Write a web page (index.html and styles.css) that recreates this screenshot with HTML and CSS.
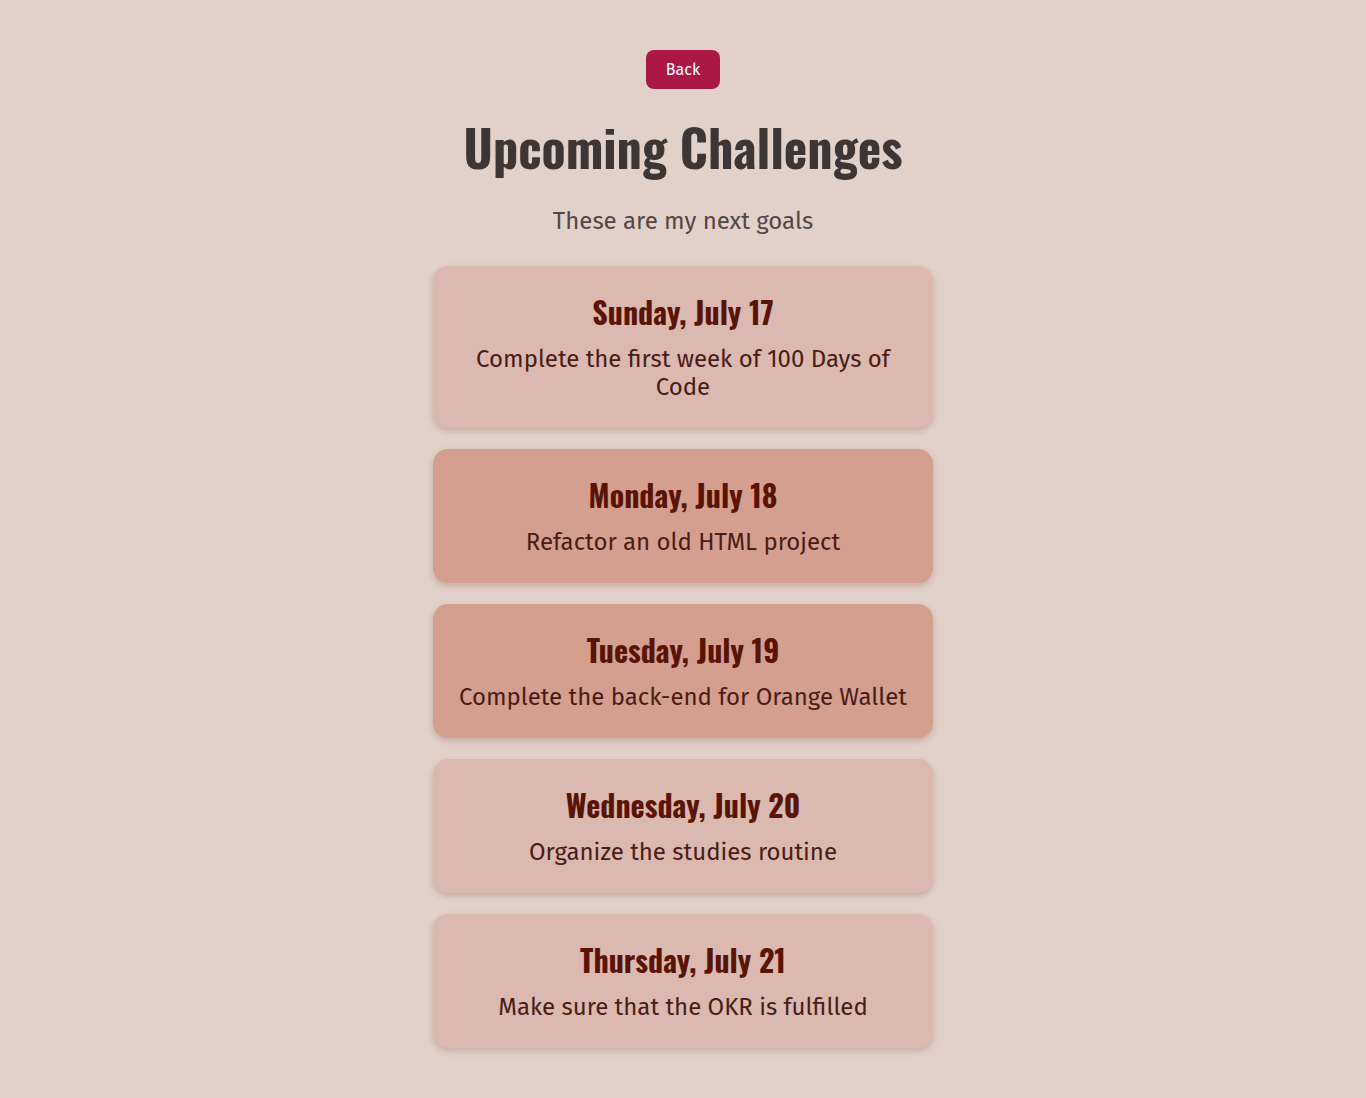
FILE: index.html
```html
<!DOCTYPE html>
<html lang="en">
<head>
<meta charset="utf-8">
<title>Upcoming Challenges</title>
<link rel="stylesheet" href="styles.css">
</head>
<body>
<main class="page">
  <a class="back" href="#">Back</a>
  <h1 class="title">Upcoming Challenges</h1>
  <p class="subtitle">These are my next goals</p>
  <ul class="list">
    <li class="card">
      <h2 class="card-title">Sunday, July 17</h2>
      <p class="card-text">Complete the first week of 100 Days of Code</p>
    </li>
    <li class="card card-dark">
      <h2 class="card-title">Monday, July 18</h2>
      <p class="card-text">Refactor an old HTML project</p>
    </li>
    <li class="card card-dark">
      <h2 class="card-title">Tuesday, July 19</h2>
      <p class="card-text">Complete the back-end for Orange Wallet</p>
    </li>
    <li class="card">
      <h2 class="card-title">Wednesday, July 20</h2>
      <p class="card-text">Organize the studies routine</p>
    </li>
    <li class="card">
      <h2 class="card-title">Thursday, July 21</h2>
      <p class="card-text">Make sure that the OKR is fulfilled</p>
    </li>
  </ul>
</main>
</body>
</html>
```

FILE: styles.css
```css
* { box-sizing: border-box; }
html, body { margin: 0; padding: 0; }
body {
  background: #e2d1c9;
  font-family: "Fira Sans", "Open Sans", "Noto Sans", sans-serif;
}
.page {
  display: flex;
  flex-direction: column;
  align-items: center;
  padding: 50px 0 50px;
}
.back {
  display: inline-flex;
  align-items: center;
  justify-content: center;
  width: 74px;
  height: 39px;
  background: #ab1846;
  color: #fff;
  border-radius: 8px;
  text-decoration: none;
  font-size: 16px;
}
.title {
  margin: 27px 0 0;
  font-family: "Oswald", "Liberation Sans Narrow", "DejaVu Sans Condensed", sans-serif;
  font-weight: 700;
  font-size: 50px;
  line-height: 60px;
  color: #3e3535;
}
.subtitle {
  margin: 31px 0 0;
  font-size: 24px;
  line-height: 28px;
  color: #544646;
}
.list {
  list-style: none;
  margin: 31px 0 0;
  padding: 0;
  width: 500px;
  display: flex;
  flex-direction: column;
  gap: 21px;
}
.card {
  background: #dbb9b0;
  border-radius: 15px;
  box-shadow: 0 3px 6px rgba(120, 80, 70, 0.28);
  padding: 28px 22px 27px;
  text-align: center;
}
.card-dark { background: #d59f90; }
.card-title {
  margin: 0;
  font-family: "Oswald", "Liberation Sans Narrow", "DejaVu Sans Condensed", sans-serif;
  font-weight: 700;
  font-size: 30px;
  line-height: 36px;
  color: #5a1406;
}
.card-text {
  margin: 15px 0 0;
  font-size: 24px;
  line-height: 28px;
  color: #4a1c16;
}
```
